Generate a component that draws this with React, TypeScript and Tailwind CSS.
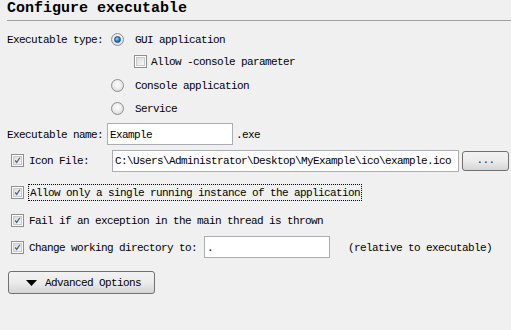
import React from 'react';

const mono = { fontFamily: '"Liberation Mono", "DejaVu Sans Mono", monospace' };

function Radio({ checked }: { checked?: boolean }) {
  return (
    <div className="w-[13px] h-[13px] rounded-full border border-[#8e8f8f] bg-[radial-gradient(circle_at_50%_40%,#ffffff_0%,#e6e6e6_60%,#c8c8c8_100%)] flex items-center justify-center shrink-0">
      {checked && (
        <div className="w-[7px] h-[7px] rounded-full bg-[radial-gradient(circle_at_40%_35%,#9fe0ff_0%,#2b8fd6_45%,#0b3f73_100%)] border border-[#1e4c7a]" />
      )}
    </div>
  );
}

function Check({ checked }: { checked?: boolean }) {
  return (
    <div className="w-[13px] h-[13px] border border-[#8e8f8f] bg-white p-[1px] shrink-0">
      <div className="w-full h-full bg-gradient-to-br from-[#dcdcdc] to-[#f7f7f7] border border-[#c9c9c9] flex items-center justify-center">
        {checked && (
          <svg width="9" height="9" viewBox="0 0 9 9">
            <path d="M1.5 4.5 L3.5 7 L7.5 1" fill="none" stroke="#4a5f97" strokeWidth="1.6" />
          </svg>
        )}
      </div>
    </div>
  );
}

function Input({ value, w }: { value: string; w: string }) {
  return (
    <div className={`${w} h-[22px] border border-[#abadb3] bg-white flex items-center pl-[2px] pt-[2px] text-black overflow-hidden whitespace-nowrap`}>
      {value}
    </div>
  );
}

export default function App() {
  return (
    <div className="w-[511px] h-[330px] bg-[#f0f0f0] text-black overflow-hidden text-[11px] tracking-[-0.6px] leading-none" style={mono}>
      <div className="ml-[7px] h-[21px] border-b border-[#a0a0a0] flex items-end pb-[4px]">
        <span className="text-[15px] font-bold leading-none tracking-[0px]">Configure executable</span>
      </div>

      <div className="mt-[7px] h-[22px] flex items-center pl-[7px]">
        <span className="w-[104px] pt-[2px]">Executable type:</span>
        <Radio checked />
        <span className="ml-[11px] pt-[2px]">GUI application</span>
      </div>
      <div className="h-[22px] flex items-center pl-[134px]">
        <Check />
        <span className="ml-[4px] pt-[2px]">Allow -console parameter</span>
      </div>
      <div className="mt-[2px] h-[22px] flex items-center pl-[111px]">
        <Radio />
        <span className="ml-[11px] pt-[2px]">Console application</span>
      </div>
      <div className="mt-[1px] h-[22px] flex items-center pl-[111px]">
        <Radio />
        <span className="ml-[11px] pt-[2px]">Service</span>
      </div>

      <div className="mt-[4px] h-[22px] flex items-center pl-[7px]">
        <span className="w-[100px] pt-[2px]">Executable name:</span>
        <Input value="Example" w="w-[126px]" />
        <span className="ml-[3px] pt-[2px]">.exe</span>
      </div>

      <div className="mt-[4px] h-[23px] flex items-center pl-[11px]">
        <Check checked />
        <span className="ml-[5px] w-[83px] pt-[2px]">Icon File:</span>
        <Input value="C:\Users\Administrator\Desktop\MyExample\ico\example.ico" w="w-[347px]" />
        <button className="ml-[3px] w-[47px] h-[20px] rounded-[3px] border border-[#707070] bg-gradient-to-b from-[#f2f2f2] via-[#ebebeb] to-[#d5d5d5] flex items-center justify-center text-[11px] text-[#1a1a6e]" style={mono}>
          ...
        </button>
      </div>

      <div className="mt-[9px] h-[22px] flex items-center pl-[11px]">
        <Check checked />
        <span className="ml-[4px] border border-dotted border-black px-[1px] pt-[3px] pb-[1px]">Allow only a single running instance of the application</span>
      </div>
      <div className="mt-[6px] h-[22px] flex items-center pl-[11px]">
        <Check checked />
        <span className="ml-[5px] pt-[2px]">Fail if an exception in the main thread is thrown</span>
      </div>
      <div className="mt-[5px] h-[22px] flex items-center pl-[11px]">
        <Check checked />
        <span className="ml-[5px] w-[175px] pt-[2px]">Change working directory to:</span>
        <Input value="." w="w-[126px]" />
        <span className="ml-[18px] pt-[2px]">(relative to executable)</span>
      </div>

      <div className="mt-[13px] pl-[8px]">
        <button className="w-[147px] h-[23px] rounded-[3px] border border-[#707070] bg-gradient-to-b from-[#f2f2f2] via-[#ebebeb] to-[#d5d5d5] flex items-center pl-[17px] pt-[1px] text-[11px] tracking-[-0.6px]" style={mono}>
          <svg width="11" height="7" viewBox="0 0 11 7" className="mr-[8px]">
            <path d="M0 0 L11 0 L5.5 6 Z" fill="#000" />
          </svg>
          Advanced Options
        </button>
      </div>
    </div>
  );
}
